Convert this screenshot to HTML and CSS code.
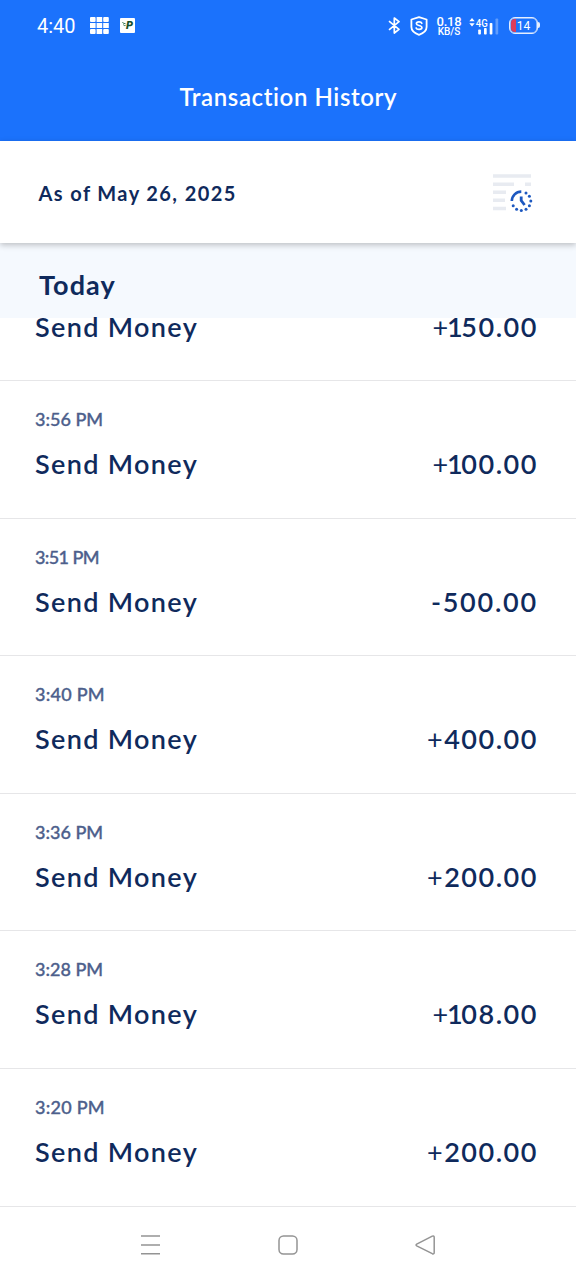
FILE: index.html
```
<!DOCTYPE html>
<html lang="en">
<head>
<meta charset="utf-8">
<title>Transaction History</title>
<link rel="stylesheet" href="styles.css">
</head>
<body>
<div class="screen">
  <header class="header">
    <div class="status">
      <span class="clock">4:40</span>
      <svg class="icon-grid" width="19" height="17" viewBox="0 0 19 17" fill="#fff"><rect width="5.6" height="5" rx="1"/><rect x="6.6" width="5.6" height="5" /><rect x="13.2" width="5.6" height="5" rx="1"/><rect y="6" width="5.6" height="5"/><rect x="6.6" y="6" width="5.6" height="5"/><rect x="13.2" y="6" width="5.6" height="5"/><rect y="12" width="5.6" height="5" rx="1"/><rect x="6.6" y="12" width="5.6" height="5"/><rect x="13.2" y="12" width="5.6" height="5" rx="1"/></svg>
      <span class="app-badge"><svg width="4" height="6" viewBox="0 0 4 6" fill="none" stroke="#3c7a50" stroke-width="1"><path d="M.5 1Q1 3 3.5 2.6M1.2 3.6Q2 5 3.6 4.4"/></svg><span>P</span></span>
      <span class="status-gap"></span>
      <svg class="icon-bt" width="13" height="17" viewBox="0 0 13 17" fill="none" stroke="#fff" stroke-width="1.7" stroke-linejoin="round"><path d="M1 4.2 11 12.3 6.3 16V1L11 4.7 1 12.8"/></svg>
      <svg class="icon-shield" width="18" height="20" viewBox="0 0 18 20" fill="none" stroke="#fff" stroke-linecap="round" stroke-linejoin="round"><path stroke-width="1.8" d="M9 1.2 16.6 3.5V11C16.6 15 13 17.4 9 18.8 5 17.4 1.4 15 1.4 11V3.5Z"/><path stroke-width="1.7" d="M11.8 7.3C11.2 5.4 6.4 5.3 6.4 7.7 6.4 10 11.9 9 11.9 11.6 11.9 14 6.8 14 6.1 12"/></svg>
      <span class="speed"><span class="speed-value">0.18</span><span class="speed-unit">KB/S</span></span>
      <svg class="icon-signal" width="31" height="20" viewBox="0 0 31 20" fill="#fff"><path d="M.3 5.2 3 2 5.7 5.2ZM.3 7.3 3 10.5 5.7 7.3Z"/><rect x="9.2" y="13.5" width="2.7" height="5" rx=".8"/><rect x="15" y="12" width="2.7" height="6.5" rx=".8"/><rect x="20.7" y="7" width="2.7" height="11.5" rx=".8"/><rect x="26.5" y="2.5" width="2.7" height="16" rx=".8" opacity=".3"/><text class="net" x="6.7" y="10.8" textLength="12" lengthAdjust="spacingAndGlyphs">4G</text></svg>
      <span class="battery"><span class="battery-fill"></span><span class="battery-text">14</span></span>
    </div>
    <h1 class="title">Transaction History</h1>
  </header>

  <section class="asof">
    <span class="asof-text">As of May 26, 2025</span>
    <svg class="icon-history" width="42" height="40" viewBox="0 0 42 40" fill="none"><g stroke="#e8ebf1" stroke-width="3.4"><path d="M1 3H39M1 11.3H22M33 11.3H39M1 19.3H14M1 27.3H13M1 35.5H14"/></g><path d="M19.8 28A9.5 9.5 0 0 1 29.3 18.6" stroke="#1c58c0" stroke-width="2.6"/><g fill="#1c58c0"><circle cx="34" cy="19.9" r="1.5"/><circle cx="37.4" cy="23.3" r="1.5"/><circle cx="38.8" cy="28" r="1.5"/><circle cx="37.4" cy="32.7" r="1.5"/><circle cx="34" cy="36.2" r="1.5"/><circle cx="29.3" cy="37.5" r="1.5"/><circle cx="24.6" cy="36.2" r="1.5"/><circle cx="21.2" cy="32.7" r="1.5"/></g><path d="M29.2 23.5V27.6L32.6 32" stroke="#1c58c0" stroke-width="2.8"/></svg>
  </section>

  <h2 class="day">Today</h2>

  <main class="list">
    <div class="row row-cut"><div class="line"><span class="name">Send Money</span><span class="amount"><span class="plus tight">+</span><span class="tight">1</span>50.00</span></div></div>
    <div class="row"><span class="time">3:56 PM</span><div class="line"><span class="name">Send Money</span><span class="amount"><span class="plus tight">+</span><span class="tight">1</span>00.00</span></div></div>
    <div class="row"><span class="time time-narrow">3:51 PM</span><div class="line"><span class="name">Send Money</span><span class="amount amount-minus">-500.00</span></div></div>
    <div class="row"><span class="time time-wide">3:40 PM</span><div class="line"><span class="name">Send Money</span><span class="amount"><span class="plus">+</span>400.00</span></div></div>
    <div class="row"><span class="time">3:36 PM</span><div class="line"><span class="name">Send Money</span><span class="amount"><span class="plus">+</span>200.00</span></div></div>
    <div class="row"><span class="time">3:28 PM</span><div class="line"><span class="name">Send Money</span><span class="amount"><span class="plus tight">+</span><span class="tight">1</span>08.00</span></div></div>
    <div class="row"><span class="time time-wide">3:20 PM</span><div class="line"><span class="name">Send Money</span><span class="amount"><span class="plus">+</span>200.00</span></div></div>
  </main>

  <nav class="nav">
    <svg width="22" height="22" viewBox="0 0 22 22" fill="none" stroke="#949494" stroke-width="1.6"><path d="M1 2H20M1 11H20M1 19.8H20"/></svg>
    <svg width="22" height="22" viewBox="0 0 22 22" fill="none" stroke="#949494" stroke-width="1.5"><rect x="2" y="2" width="18" height="18" rx="4.5"/></svg>
    <svg width="22" height="22" viewBox="0 0 22 22" fill="none" stroke="#949494" stroke-width="1.5" stroke-linejoin="round"><path d="M2.7 10.2 18.3 2.1Q20.2 1.5 20.2 3.4V18.4Q20.2 20.4 18.3 19.7L2.7 11.8Q1.4 11 2.7 10.2Z"/></svg>
  </nav>
</div>
</body>
</html>
```
FILE: styles.css
```
body {
  margin: 0;
  background: #fff;
  font-family: Lato, "Open Sans", sans-serif;
  color: #0f2a5c;
}
.screen {
  width: 576px;
  height: 1280px;
  overflow: hidden;
  display: flex;
  flex-direction: column;
}
.header {
  height: 141px;
  flex: none;
  background: #1b72fc;
  color: #fff;
}
.status {
  height: 51px;
  display: flex;
  align-items: center;
  padding: 0 35px 0 37px;
}
.clock {
  width: 53px;
  font: 400 20px/24px Roboto, sans-serif;
}
.app-badge {
  width: 15px;
  height: 15px;
  margin-left: 11px;
  border-radius: 1px;
  background: #fff;
  color: #17502b;
  display: flex;
  align-items: flex-start;
  justify-content: center;
  font: italic 900 11px/15px Roboto, sans-serif;
}
.app-badge svg { margin-top: 3px; }
.status-gap { flex: 1; }
.icon-shield { margin-left: 9px; }
.speed {
  width: 26px;
  margin-left: 8px;
  display: flex;
  flex-direction: column;
  align-items: center;
  font-family: Roboto, sans-serif;
  font-weight: 500;
}
.speed-value { font-size: 13px; line-height: 11px; letter-spacing: -.2px; }
.speed-unit { font-size: 10px; line-height: 9px; }
.icon-signal { margin: 0 9px 0 7px; }
.net { font: 500 11px Roboto, sans-serif; }
.battery {
  position: relative;
  box-sizing: border-box;
  width: 29px;
  height: 17px;
  margin-right: 3px;
  border: 1.5px solid #e4eeff;
  box-shadow: inset 0 0 0 .5px #e4eeff;
  border-radius: 6px;
  display: flex;
  align-items: center;
  justify-content: center;
}
.battery::after {
  content: "";
  position: absolute;
  right: -3px;
  top: 4px;
  width: 2px;
  height: 6px;
  border-radius: 0 2px 2px 0;
  background: #e4eeff;
}
.battery-fill {
  position: absolute;
  left: 1px;
  top: 1px;
  width: 5px;
  height: 13px;
  border-radius: 4px 0 0 4px;
  background: #dc3c5a;
}
.battery-text { position: relative; font: 400 12px/14px Roboto, sans-serif; }
.title {
  margin: 31px 0 0;
  font-size: 24px;
  line-height: 30px;
  font-weight: 600;
  letter-spacing: .6px;
  text-indent: .6px;
  text-align: center;
}
.asof {
  position: relative;
  z-index: 1;
  flex: none;
  height: 102px;
  box-sizing: border-box;
  padding: 2px 42px 0 38.5px;
  display: flex;
  align-items: center;
  justify-content: space-between;
  background: #fff;
  box-shadow: 0 2px 6px rgba(0, 0, 0, .24);
}
.asof-text {
  margin-bottom: 1px;
  font-size: 20px;
  font-weight: 700;
  letter-spacing: 1.4px;
}
.day {
  flex: none;
  height: 75px;
  box-sizing: border-box;
  margin: 0;
  padding: 26px 39px 0;
  background: #f5f9fe;
  font-size: 27px;
  line-height: 32px;
  font-weight: 700;
  letter-spacing: 1.1px;
}
.list { flex: none; }
.row {
  height: 137.6px;
  box-sizing: border-box;
  padding: 27px 39px 0 35px;
  border-bottom: 1.4px solid #e6e6e8;
}
.row-cut { height: 63px; padding-top: 0; }
.row .line {
  display: flex;
  justify-content: space-between;
  margin-top: 18px;
  font-size: 27px;
  line-height: 32px;
  font-weight: 600;
}
.row-cut .line { margin-top: 0; line-height: 17px; }
.time {
  display: block;
  height: 22px;
  font-size: 18px;
  line-height: 22px;
  font-weight: 500;
  -webkit-text-stroke: .35px #4d5f8c;
  color: #4d5f8c;
}
.time-narrow { letter-spacing: -.6px; }
.time-wide { letter-spacing: .25px; }
.name { letter-spacing: 1.35px; }
.amount { margin-right: -.9px; letter-spacing: 1.5px; }
.amount-minus { letter-spacing: 1.75px; }
.plus { font-weight: 400; }
.amount .tight { letter-spacing: -1.2px; }
.nav {
  flex: 1;
  display: flex;
  align-items: center;
  justify-content: space-between;
  padding: 3px 140px 0 140px;
}
```
